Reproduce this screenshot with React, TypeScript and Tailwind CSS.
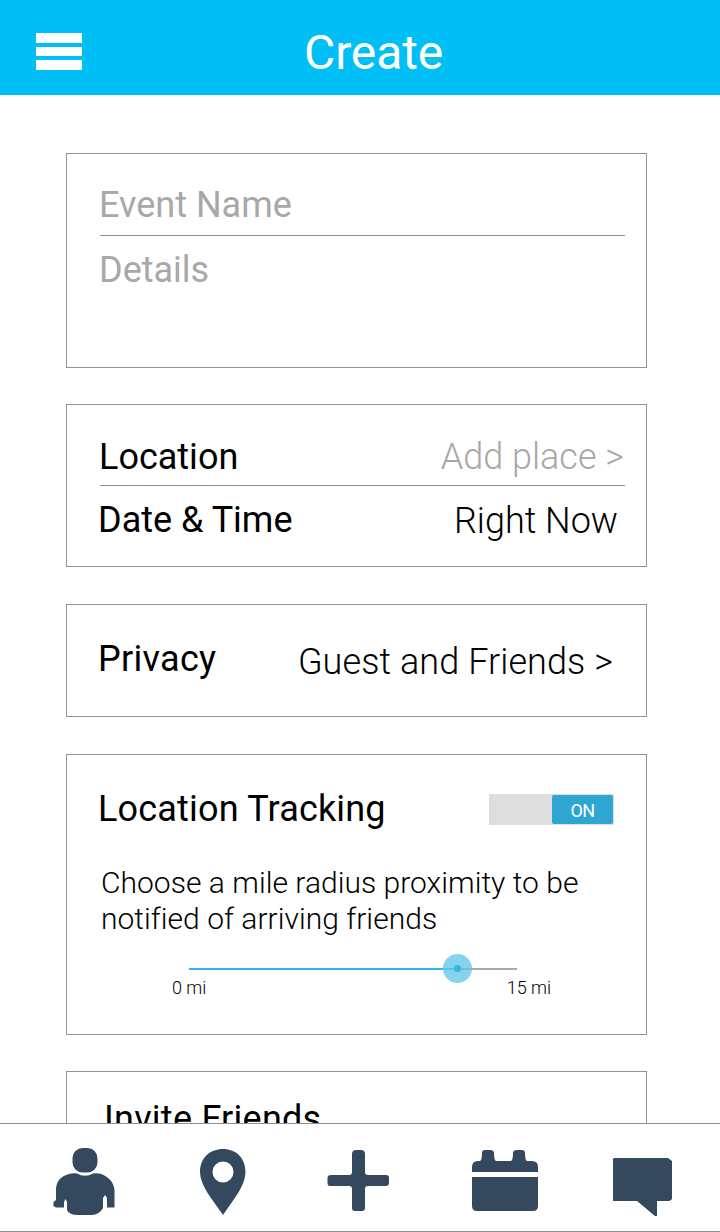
import type { ReactNode } from "react";

function Card({ className, children }: { className: string; children: ReactNode }) {
  return (
    <section className={`ml-[66px] w-[581px] shrink-0 border border-[#939393] bg-white ${className}`}>
      {children}
    </section>
  );
}

function Divider() {
  return <div className="ml-[33px] h-px w-[525px] bg-[#8f8f8f]" />;
}

function Header() {
  return (
    <header className="flex h-[95px] shrink-0 bg-[#00bff6]">
      <button aria-label="Menu" className="mt-[33px] ml-9 flex h-[37px] w-[46px] flex-col justify-between">
        <span className="h-[10px] w-full bg-white" />
        <span className="h-[9px] w-full bg-white" />
        <span className="h-[10px] w-full bg-white" />
      </button>
      <h1 className="mt-[23px] ml-[222px] text-[48px] leading-[60px] tracking-[-0.1px] text-white">Create</h1>
    </header>
  );
}

function PersonIcon() {
  return (
    <svg width="64" height="70" viewBox="0 0 64 70" fill="#34495e">
      <rect x="19.500" y="0" width="25" height="24.500" rx="10" />
      <path d="M16 26 Q20 25 24 25.500 Q32 30 40 25.500 Q45 25 48 26 Q61 31 61.500 43 V59.500 H54 V50 L52 47 L50 50 V60 Q46 67 39 67 H25 Q16 67 14 62 V54 L12.500 51 L11 54 V59.500 H3 L0.500 58 V54 L3 52 V40 Q4 29 16 26Z" />
    </svg>
  );
}

function PinIcon() {
  return (
    <svg width="48" height="68" viewBox="0 0 48 68" fill="#34495e">
      <path
        fillRule="evenodd"
        d="M24 1 C37 1 46.500 10 46.500 24 C46.500 38 34 52 24 67 C14 52 1 38 1 24 C1 10 11 1 24 1Z M24 13.500 A10.500 10.500 0 1 0 24 34.500 A10.500 10.500 0 1 0 24 13.500Z"
      />
    </svg>
  );
}

function PlusIcon() {
  return (
    <svg width="64" height="64" viewBox="0 0 64 64" fill="#34495e">
      <path d="M29 0 H34 Q38 0 38 4 V22 Q38 25 41 25 H59 Q62 25 62 28 V33 Q62 36 59 36 H41 Q38 36 38 39 V58 Q38 61 35 61 H28 Q25 61 25 58 V39 Q25 36 22 36 H3 Q0.500 36 0.500 33 V28 Q0.500 25 4 25 H22 Q25 25 25 22 V4 Q25 0 29 0Z" />
    </svg>
  );
}

function CalendarIcon() {
  return (
    <svg width="68" height="64" viewBox="0 0 68 64" fill="#34495e">
      <path d="M1 23 V18 Q1 12 7 12 H9 Q11 11 11 4 Q11 1 14 1 H19 Q23 1 23 4 Q23 11 25 12 H40 Q42 11 42 4 Q42 1 46 1 H51 Q54 1 54 4 Q54 11 56 12 H61 Q67 12 67 18 V23Z" />
      <path d="M1 28 H67 V57 Q67 62 62 62 H6 Q1 62 1 57Z" />
    </svg>
  );
}

function ChatIcon() {
  return (
    <svg width="62" height="62" viewBox="0 0 62 62" fill="#34495e">
      <path d="M2 1 H56 L60 4 V41 Q60 44 56 44 H45 V59 H43 L25 44 H1 V2Z" />
    </svg>
  );
}

function NavBar() {
  return (
    <nav className="flex h-[109px] shrink-0 items-start border-y border-[#8f8f8f] bg-white">
      <button aria-label="Profile" className="mt-6 ml-[53px]"><PersonIcon /></button>
      <button aria-label="Places" className="mt-6 ml-[82px]"><PinIcon /></button>
      <button aria-label="Create" className="mt-[26px] ml-[80px]"><PlusIcon /></button>
      <button aria-label="Calendar" className="mt-[25px] ml-[80px]"><CalendarIcon /></button>
      <button aria-label="Messages" className="mt-[33px] ml-[73px]"><ChatIcon /></button>
    </nav>
  );
}

export default function App() {
  return (
    <div className="flex h-[1232px] w-[720px] flex-col overflow-hidden bg-white font-['Roboto',sans-serif] text-[36px] leading-[40px] whitespace-nowrap text-black">
      <Header />
      <main className="flex min-h-0 flex-1 flex-col overflow-hidden">
        <Card className="mt-[58px] h-[215px]">
          <p className="mt-[31px] ml-[32px] text-[#a8a8a8]">Event Name</p>
          <div className="mt-[10px]"><Divider /></div>
          <p className="mt-[14px] ml-[32px] text-[#a8a8a8]">Details</p>
        </Card>

        <Card className="mt-[36px] h-[163px]">
          <div className="mt-[32px] mr-[22px] ml-[32px] flex justify-between">
            <span>Location</span>
            <span className="font-light text-[#a8a8a8]">Add place &gt;</span>
          </div>
          <div className="mt-[8px]"><Divider /></div>
          <div className="mt-[14px] mr-[28px] ml-[31px] flex justify-between">
            <span>Date &amp; Time</span>
            <span className="mt-px font-light">Right Now</span>
          </div>
        </Card>

        <Card className="mt-[37px] h-[113px]">
          <div className="mt-[34px] mr-[33px] ml-[31px] flex justify-between">
            <span className="tracking-[0.3px]">Privacy</span>
            <span className="mt-[3px] font-light tracking-[0.08px]">Guest and Friends &gt;</span>
          </div>
        </Card>

        <Card className="mt-[37px] h-[281px]">
          <div className="mt-[33px] mr-[32px] ml-[31px] flex justify-between">
            <span className="mt-px tracking-[0.18px]">Location Tracking</span>
            <button
              role="switch"
              aria-checked="true"
              aria-label="Location Tracking"
              className="mt-[6px] flex h-[31px] w-[125px] justify-end bg-[#dedede] p-px"
            >
              <span className="h-[29px] w-[61px] rounded-xs bg-[#2ea6d1] text-center text-[18px] leading-[32px] tracking-[-0.6px] text-white">ON</span>
            </button>
          </div>
          <p className="mt-[36px] ml-[34px] text-[30px] leading-[36px] font-light">
            <span className="tracking-[0.03px]">Choose a mile radius proximity to be</span>
            <br />
            <span className="tracking-[0.03px]">notified of arriving friends</span>
          </p>
          <div className="mt-[17px] ml-[122px] flex h-[29px] w-[328px] items-center">
            <div className="h-[2px] w-[254px] bg-[#33b5e5]" />
            <div className="flex size-[29px] items-center justify-center rounded-full bg-[#85d3ef]">
              <div className="h-[2px] w-[11px] bg-[#5cc1e6]" />
              <div className="size-[7px] rounded-full bg-[#33b5e5]" />
              <div className="h-[2px] w-[11px] bg-[#75bdd5]" />
            </div>
            <div className="h-[2px] flex-1 bg-[#aaaaaa]" />
          </div>
          <div className="-mt-[5px] ml-[105px] flex w-[379px] justify-between text-[18px] leading-[20px] font-light">
            <span>0 mi</span>
            <span>15 mi</span>
          </div>
        </Card>

        <Card className="mt-[36px] h-[215px]">
          <p className="mt-[27px] ml-[37px] tracking-[0.25px]">Invite Friends</p>
        </Card>
      </main>
      <NavBar />
    </div>
  );
}
